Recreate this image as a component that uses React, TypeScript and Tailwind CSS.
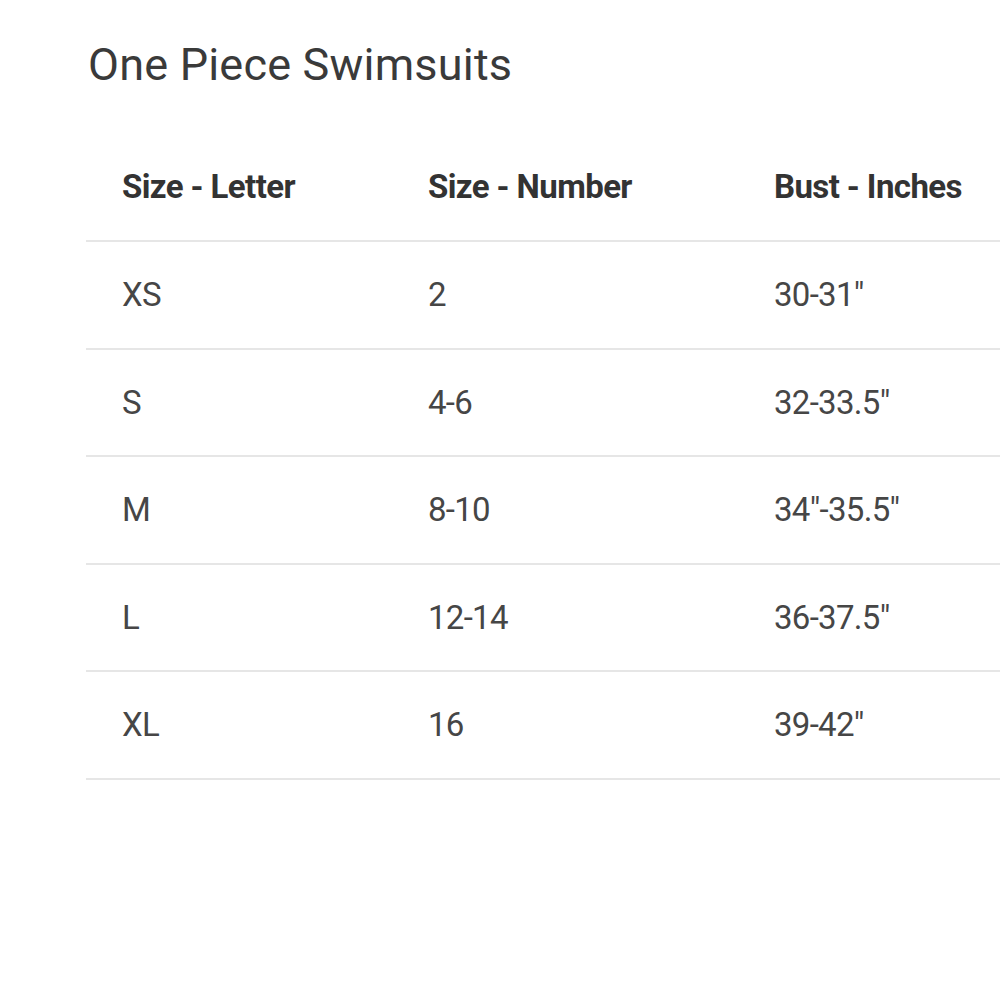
const rows = [
  ['XS', '2', '30-31"'],
  ['S', '4-6', '32-33.5"'],
  ['M', '8-10', '34"-35.5"'],
  ['L', '12-14', '36-37.5"'],
  ['XL', '16', '39-42"'],
];

export default function App() {
  return (
    <div className="w-[1000px] h-[1000px] overflow-hidden bg-white font-['Roboto',sans-serif]">
      <div className="pl-[86px] pt-[36px]">
        <h1 className="pl-[2px] text-[45px] leading-[58px] text-[#3a3a3a] font-normal tracking-[0.2px]">
          One Piece Swimsuits
        </h1>
        <div className="mt-[40px] w-[1100px]">
          <div className="grid grid-cols-[306px_346px_1fr] items-center h-[108px] border-b-2 border-[#e6e6e6] pl-[36px] text-[#333] font-bold text-[33px] tracking-[-0.6px]">
            <div>Size - Letter</div>
            <div>Size - Number</div>
            <div>Bust - Inches</div>
          </div>
          {rows.map((r) => (
            <div
              key={r[0]}
              className="grid grid-cols-[306px_346px_1fr] items-center h-[107.6px] border-b-2 border-[#e6e6e6] pl-[36px] text-[#464646] text-[33px] tracking-[-0.7px]"
            >
              <div>{r[0]}</div>
              <div>{r[1]}</div>
              <div>{r[2]}</div>
            </div>
          ))}
        </div>
      </div>
    </div>
  );
}
